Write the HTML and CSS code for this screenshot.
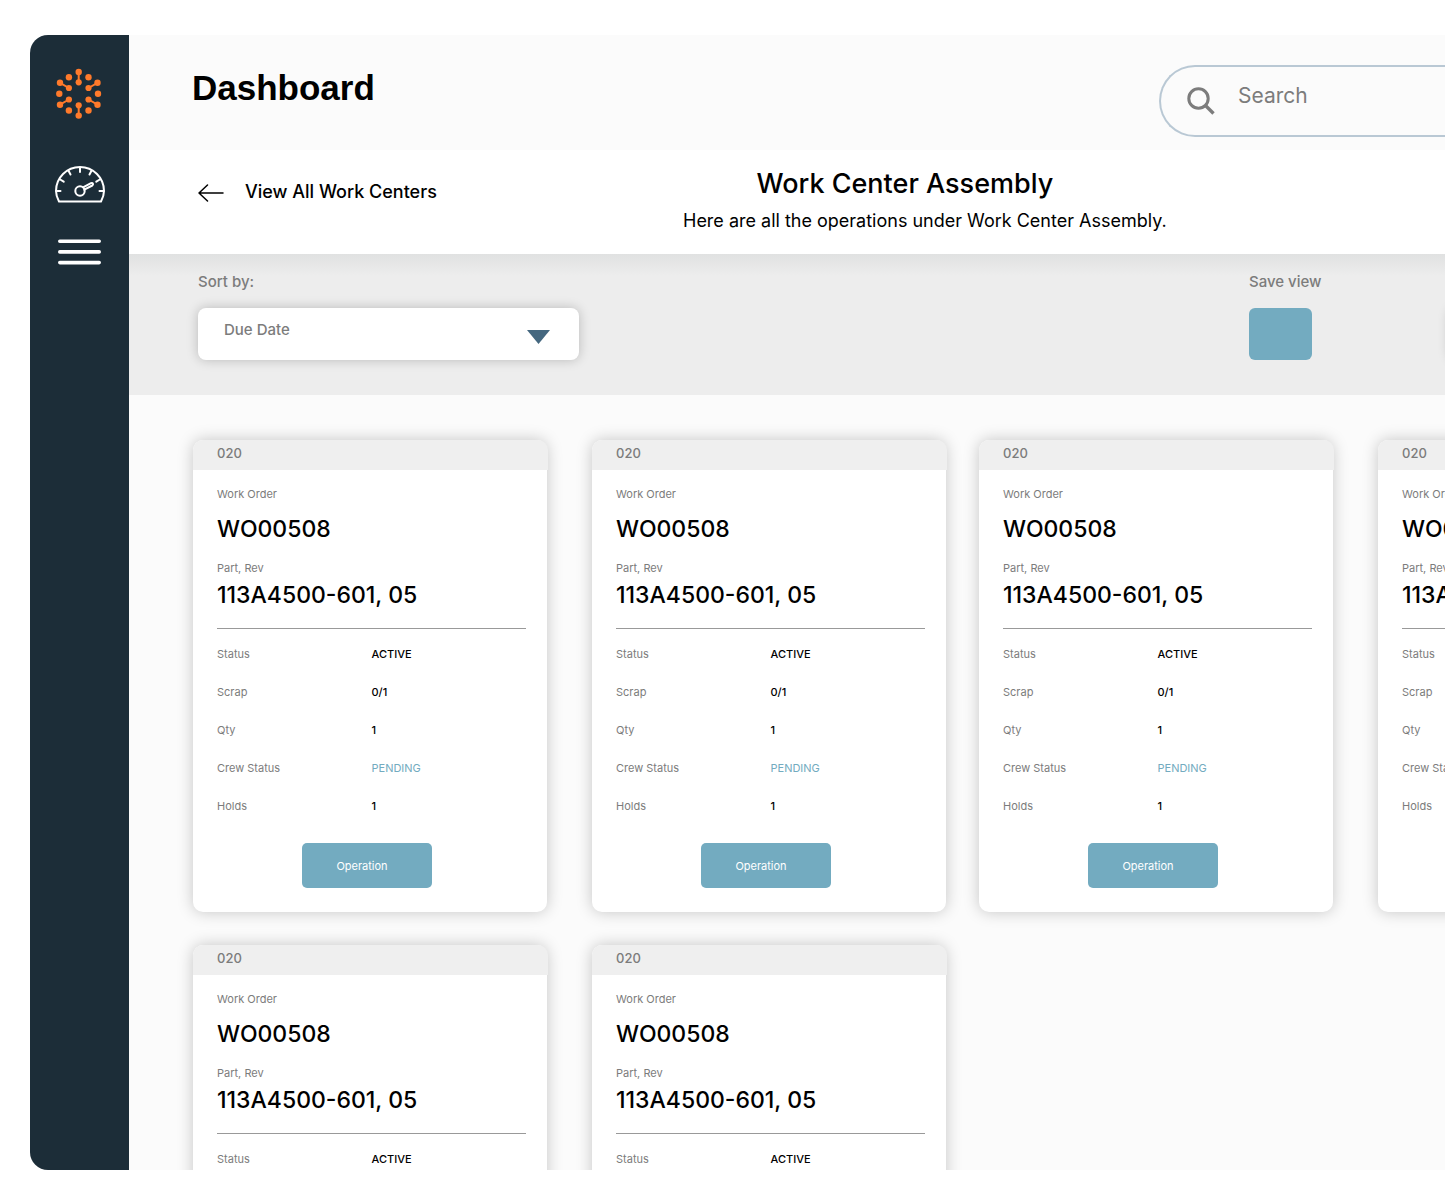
FILE: index.html
```html
<!DOCTYPE html>
<html lang="en">
<head>
<meta charset="utf-8">
<title>Dashboard</title>
<link rel="stylesheet" href="styles.css">
</head>
<body>
<div class="app">
  <nav class="sidebar">
    <a href="#" class="side-link logo">
      <svg width="48" height="52" viewBox="0 0 48 52" fill="#ff7a2b" stroke="#ff7a2b">
        <g stroke="none">
          <circle cx="22.7" cy="4" r="3.200"/><circle cx="22.7" cy="14.3" r="3.100"/>
          <circle cx="22.7" cy="37.3" r="3.100"/><circle cx="22.7" cy="47.6" r="3.200"/>
          <circle cx="4" cy="14.8" r="3.200"/><circle cx="12.9" cy="20" r="3.100"/>
          <circle cx="41.5" cy="14.8" r="3.200"/><circle cx="32.5" cy="20" r="3.100"/>
          <circle cx="4" cy="36.7" r="3.200"/><circle cx="12.9" cy="31.5" r="3.100"/>
          <circle cx="41.5" cy="36.7" r="3.200"/><circle cx="32.5" cy="31.5" r="3.100"/>
          <circle cx="12.9" cy="9.2" r="3.200"/><circle cx="32.5" cy="9.2" r="3.200"/>
          <circle cx="3.3" cy="25.8" r="3.200"/><circle cx="42" cy="25.8" r="3.200"/>
          <circle cx="12.9" cy="42.5" r="3.200"/><circle cx="32.5" cy="42.5" r="3.200"/>
        </g>
        <path d="M22.7 4v10.300M22.7 37.300v10.300M4 14.800l8.900 5.200M41.500 14.800l-9 5.200M4 36.700l8.900-5.200M41.500 36.700l-9-5.200" stroke-width="2"/>
      </svg>
    </a>
    <a href="#" class="side-link gauge">
      <svg width="50" height="37" viewBox="0 0 50 37" fill="none" stroke="#fff" stroke-width="2" stroke-linecap="round" stroke-linejoin="round">
        <path d="M4 35.500C2.200 32 1 28.500 1 25a24 24 0 0 1 48 0c0 3.500-1.200 7-3 10.500z"/>
        <path d="M25 2v4M13.500 4.800l2 3.700M36.500 4.800l-2 3.700M5.200 13.500l3.500 2.200M44.800 13.500l-3.500 2.200M1.500 25H5.500M48.500 25h-4"/>
        <circle cx="25" cy="25" r="4.700"/>
        <path d="M28 21.300l8-4.200c2-.6 2.700 1.200 1.300 2.400l-8 4.200"/>
      </svg>
    </a>
    <button class="side-link menu" type="button">
      <svg width="43" height="26" viewBox="0 0 43 26" stroke="#fff" stroke-width="3.600" stroke-linecap="round"><path d="M1.800 2.200h39.400M1.800 12.900h39.400M1.800 23.600h39.400"/></svg>
    </button>
  </nav>
  <main class="main">
    <header class="topbar">
      <h1 class="page-title">Dashboard</h1>
      <label class="search">
        <svg width="28" height="28" viewBox="0 0 28 28" fill="none" stroke="#7c7c7c"><circle cx="11.500" cy="11.500" r="9.700" stroke-width="3"/><path d="M18.500 18.500l8 8" stroke-width="3.400"/></svg>
        <input type="search" placeholder="Search">
      </label>
    </header>
    <section class="subbar">
      <a href="#" class="back">
        <svg class="back-arrow" width="26" height="18" viewBox="0 0 26 18" fill="none" stroke="#000" stroke-width="1.500" stroke-linecap="round" stroke-linejoin="round"><path d="M9.500 1L1 9l8.500 8M1 9h24"/></svg>
        View All Work Centers
      </a>
      <div class="heading">
        <h2 class="heading-title">Work Center Assembly</h2>
        <p class="heading-text">Here are all the operations under Work Center Assembly.</p>
      </div>
    </section>
    <section class="toolbar">
      <div class="field">
        <label for="sort" class="field-label">Sort by:</label>
        <div class="select-wrap">
          <select id="sort" class="select"><option>Due Date</option></select>
          <svg class="caret" width="23" height="14" viewBox="0 0 23 14" fill="#44677f"><path d="M0 0h23L11.500 14z"/></svg>
        </div>
      </div>
      <div class="field save">
        <label for="save" class="field-label">Save view</label>
        <button id="save" class="save-button" type="button"></button>
      </div>
      <div class="view-panel"></div>
    </section>
    <section class="cards" id="cards"></section>
  </main>
</div>
<template id="card">
  <article class="card">
    <header class="card-head">020</header>
    <div class="card-body">
      <p class="label">Work Order</p>
      <p class="value order">WO00508</p>
      <p class="label">Part, Rev</p>
      <p class="value part">113A4500-601, 05</p>
      <table class="facts">
        <tr><th>Status</th><td>ACTIVE</td></tr>
        <tr><th>Scrap</th><td>0/1</td></tr>
        <tr><th>Qty</th><td>1</td></tr>
        <tr><th>Crew Status</th><td class="pending">PENDING</td></tr>
        <tr><th>Holds</th><td>1</td></tr>
      </table>
      <button class="operation" type="button">Operation</button>
    </div>
  </article>
</template>
<script src="cards.js"></script>
</body>
</html>
```
FILE: cards.js
```js
// One card per operation in the work center.
const operationCount = 6;
const list = document.getElementById("cards");
const template = document.getElementById("card");
for (let i = 0; i < operationCount; i++) {
  list.appendChild(template.content.cloneNode(true));
}
```
FILE: styles.css
```css
* { box-sizing: border-box; }
body {
  margin: 0;
  height: 100vh;
  padding: 35px 0 28px 30px;
  background: #fff;
  color: #000;
  font-family: Inter, "Liberation Sans", sans-serif;
  overflow: hidden;
}
h1, h2, p { margin: 0; }
a { color: inherit; text-decoration: none; }
button { border: 0; padding: 0; font: inherit; cursor: pointer; }
svg { display: block; flex: none; }

.app { display: flex; height: 100%; }

.sidebar {
  flex: none;
  width: 99px;
  padding-top: 33px;
  display: flex;
  flex-direction: column;
  align-items: center;
  background: #1c2d38;
  border-radius: 18px 0 0 18px;
}
.side-link { background: none; }
.logo { margin-bottom: 46px; }
.gauge { margin-bottom: 36px; }

.main {
  flex: 1;
  min-width: 0;
  background: #fbfbfb;
  overflow: hidden;
}

.topbar {
  display: flex;
  justify-content: space-between;
  height: 115px;
  padding-left: 63px;
}
.page-title {
  margin-top: 31px;
  font: 700 35px/44px "Liberation Sans", Arial, sans-serif;
}
.search {
  display: flex;
  align-items: center;
  width: 286px;
  height: 72px;
  margin-top: 30px;
  padding-left: 26px;
  gap: 23px;
  border: 2px solid #b9c8d4;
  border-right: 0;
  border-radius: 36px 0 0 36px;
}
.search input {
  flex: 1;
  min-width: 0;
  padding: 0 0 10px;
  border: 0;
  outline: 0;
  background: none;
  font: 21px/28px Inter, sans-serif;
}
.search input::placeholder { color: #7c7c7c; opacity: 1; }

.subbar {
  display: flex;
  height: 104px;
  padding-left: 69px;
  background: #fff;
}
.back {
  flex: none;
  display: flex;
  align-items: center;
  gap: 21px;
  width: 485px;
  height: 82px;
  font-size: 18px;
  font-weight: 500;
}
.back-arrow { margin-top: 4px; }
.heading { padding-top: 18px; }
.heading-title {
  padding-right: 40px;
  font-size: 27px;
  line-height: 32px;
  font-weight: 500;
  text-align: center;
}
.heading-text { margin-top: 8px; font-size: 18px; line-height: 26px; white-space: nowrap; }

.toolbar {
  display: flex;
  height: 141px;
  padding: 18px 0 0 69px;
  background: linear-gradient(#e0e1e1, #ededed 22px);
  overflow: hidden;
}
.field { flex: none; }
.field-label {
  display: block;
  margin-bottom: 16px;
  color: #7c7c7c;
  font-size: 15px;
  line-height: 20px;
  font-weight: 500;
}
.select-wrap { display: flex; align-items: center; width: 381px; }
.select {
  width: 100%;
  height: 52px;
  padding: 0 26px 8px;
  border: 0;
  border-radius: 8px;
  appearance: none;
  background: #fff;
  color: #7c7c7c;
  font: 500 15px/20px Inter, sans-serif;
  box-shadow: 0 0 12px rgba(0, 0, 0, .22);
}
.caret { margin: 6px 0 0 -52px; pointer-events: none; }
.save { margin-left: auto; width: 200px; }
.save-button {
  display: block;
  width: 63px;
  height: 52px;
  border-radius: 6px;
  background: #73abc0;
}
.view-panel {
  flex: none;
  width: 60px;
  height: 52px;
  margin: 36px -64px 0 0;
  border-radius: 8px;
  box-shadow: 0 0 12px rgba(0, 0, 0, .2);
}

.cards {
  display: grid;
  grid-template-columns: 399px 387px 399px 354px;
  row-gap: 33px;
  padding: 45px 0 0 64px;
}
.card {
  width: 354px;
  height: 472px;
  border-radius: 10px;
  background: #fff;
  box-shadow: 0 0 16px rgba(0, 0, 0, .22);
}
.card-head {
  height: 30px;
  margin-right: -1px;
  padding-left: 24px;
  border-radius: 10px 10px 0 0;
  background: #efefef;
  color: #7c7c7c;
  font-size: 13px;
  line-height: 26px;
  font-weight: 500;
}
.card-body { padding: 16px 21px 0 24px; }
.label, .facts th { color: #7c7c7c; font-size: 11px; line-height: 16px; font-weight: 400; }
.value { font-size: 23px; line-height: 32px; font-weight: 500; }
.order { margin: 11px 0 15px; }
.part { margin-top: 3px; padding-bottom: 17px; border-bottom: 1px solid #999; box-sizing: content-box; }
.facts { width: 100%; margin-top: 6px; border-collapse: collapse; table-layout: fixed; }
.facts th, .facts td { height: 38px; padding: 0; text-align: left; vertical-align: middle; }
.facts td { font-size: 11px; line-height: 16px; font-weight: 500; }
.facts .pending { color: #73abc0; font-weight: 400; }
.operation {
  display: block;
  width: 130px;
  height: 45px;
  margin: 18px auto 0 85px;
  padding-right: 10px;
  border-radius: 5px;
  background: #73abc0;
  color: #fff;
  font-size: 11px;
}
```
